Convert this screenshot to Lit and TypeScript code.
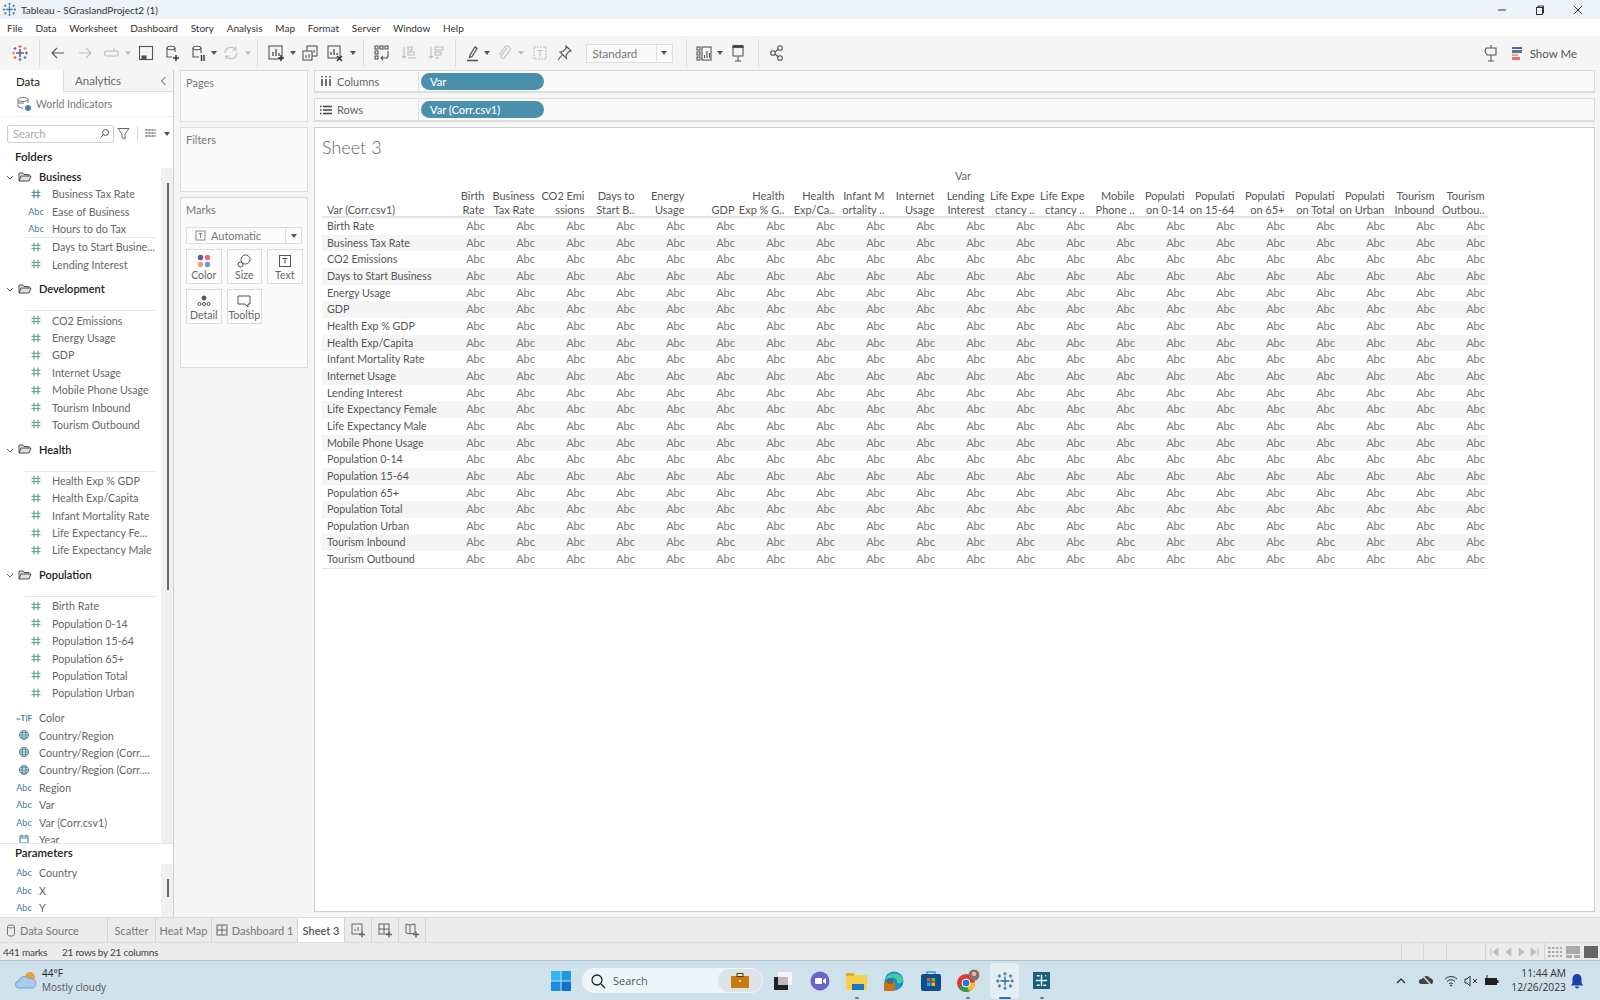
import { LitElement, html, css, svg } from "lit";
import { customElement } from "lit/decorators.js";

const ic = (body: any, c = "#555", s = 18) => html`<svg width=${s} height=${s} viewBox="0 0 18 18" fill="none" stroke=${c} stroke-width="1.1">${body}</svg>`;

const logoSvg = (a: string, b: string, c: string, d: string, s = 18) => html`<svg width=${s} height=${s} viewBox="0 0 18 18" fill="none" stroke-width="1.2">
  ${svg`<path d="M9 5v8M5 9h8" stroke=${a} stroke-width="1.6"/>
  <path d="M9 1v3M7.500 2.500h3" stroke=${b}/><path d="M9 14v3M7.500 15.500h3" stroke=${c}/>
  <path d="M1 9h3M2.500 7.500v3" stroke=${d}/><path d="M14 9h3M15.500 7.500v3" stroke=${a}/>
  <path d="M4 3v3M2.500 4.500h3" stroke=${c}/><path d="M14 3v3M12.500 4.500h3" stroke=${d}/>
  <path d="M4 12v3M2.500 13.500h3" stroke=${b}/><path d="M14 12v3M12.500 13.500h3" stroke=${c}/>`}
</svg>`;

const dark = "#555", off = "#bdbdbd";
type T = { w: number; k: string; i?: any };
const TOOL: T[] = [
  { w: 39, k: "i", i: logoSvg("#6b5b95", "#e15759", "#4e79a7", "#f28e2b") },
  { w: 1, k: "s" },
  { w: 4.5, k: "g" },
  { w: 27, k: "i", i: ic(svg`<path d="M15 9H3M8 4 3 9l5 5"/>`, dark) },
  { w: 27, k: "i", i: ic(svg`<path d="M3 9h12M10 4l5 5-5 5"/>`, off) },
  { w: 24, k: "i", i: ic(svg`<path d="M14 7H5a2.500 2.500 0 0 0 0 5h9a2 2 0 0 0 0-5M12 4v3"/>`, off) },
  { w: 10, k: "d", i: off },
  { w: 26, k: "i", i: ic(svg`<rect x="2.500" y="2.500" width="13" height="13"/><rect x="5" y="12" width="4" height="3.500" fill="#555"/>`, dark) },
  { w: 26, k: "i", i: ic(svg`<ellipse cx="8" cy="4" rx="4" ry="1.800"/><path d="M4 4v9h5M12 4v4"/><path d="M13 11v6M10 14h6" stroke-width="1.500" stroke="#333"/>`, dark) },
  { w: 26, k: "i", i: ic(svg`<ellipse cx="8" cy="4" rx="4" ry="1.800"/><path d="M4 4v9h6M12 4v5"/><path d="M12.500 11v6M15 11v6" stroke-width="1.400" stroke="#333"/>`, dark) },
  { w: 6, k: "d", i: dark },
  { w: 28, k: "i", i: ic(svg`<path d="M3 9a6 6 0 0 1 11-3M15 9a6 6 0 0 1-11 3M14 2.500V6h-3.500M4 15.500V12h3.500"/>`, off) },
  { w: 6, k: "d", i: off },
  { w: 6, k: "g" },
  { w: 1, k: "s" },
  { w: 8, k: "g" },
  { w: 20, k: "i", i: ic(svg`<rect x="2" y="2" width="13" height="13"/><path d="M6 12V8M9 12V5M12 12V9" stroke-width="1.400"/><path d="M14 11v6M11 14h6" stroke-width="1.500" stroke="#333"/>`, dark) },
  { w: 14, k: "d", i: dark },
  { w: 20, k: "i", i: ic(svg`<rect x="6" y="2" width="10" height="10"/><rect x="2" y="7" width="9" height="9" fill="#f5f5f5"/><path d="M5 14v-3M8 14v-4M13 9V6"/>`, dark) },
  { w: 30, k: "i", i: ic(svg`<rect x="2" y="2" width="12" height="12"/><path d="M5 11V8M8 11V5M11 11V9" stroke-width="1.400"/><path d="m11 12 5 5M16 12l-5 5" stroke="#333" stroke-width="1.500"/>`, dark) },
  { w: 6, k: "d", i: dark },
  { w: 7, k: "g" },
  { w: 1, k: "s" },
  { w: 6, k: "g" },
  { w: 24, k: "i", i: ic(svg`<rect x="2" y="2" width="3" height="3"/><rect x="7" y="2" width="3" height="3"/><rect x="12" y="2" width="3" height="3"/><rect x="2" y="7" width="3" height="3"/><rect x="2" y="12" width="3" height="3"/><path d="M15 7v5a2 2 0 0 1-2 2H8M10 12l-2 2 2 2"/>`, dark) },
  { w: 30, k: "i", i: ic(svg`<path d="M4 3v11M2 12l2 2 2-2"/><rect x="8" y="3" width="4" height="3"/><rect x="8" y="8" width="6" height="3"/><path d="M8 14h8"/>`, off) },
  { w: 24, k: "i", i: ic(svg`<path d="M4 3v11M2 12l2 2 2-2"/><rect x="8" y="3" width="8" height="3"/><rect x="8" y="8" width="6" height="3"/><path d="M8 14h4"/>`, off) },
  { w: 7, k: "g" },
  { w: 1, k: "s" },
  { w: 7, k: "g" },
  { w: 20, k: "i", i: ic(svg`<path d="M6 11 11 3l2 1.500-5 8-2.500 1zM3 16.500h11" stroke-width="1.300"/>`, dark) },
  { w: 9, k: "d", i: dark },
  { w: 24, k: "i", i: ic(svg`<path d="m12 4-6 8a2 2 0 0 0 3 2l6-8a3 3 0 0 0-5-3l-6 8"/>`, off) },
  { w: 10, k: "d", i: off },
  { w: 28, k: "i", i: ic(svg`<rect x="3" y="3" width="12" height="12" stroke-dasharray="2 1"/><path d="M6.500 6.500h5M9 6.500v6"/>`, off) },
  { w: 20, k: "i", i: ic(svg`<path d="M11 2 16 7l-2 .5-3 4 .5 3L5 8l3-.5 3-3zM7 11l-4 5"/>`, dark) },
  { w: 12, k: "g" },
];
const TOOL3: T[] = [
  { w: 13, k: "g" },
  { w: 1, k: "s" },
  { w: 7, k: "g" },
  { w: 20, k: "i", i: ic(svg`<rect x="2" y="3" width="3" height="3"/><rect x="2" y="8" width="3" height="3"/><rect x="2" y="13" width="3" height="3"/><rect x="7" y="3" width="9" height="13"/><path d="M9.500 14v-3M12 14V7M14.500 14v-5"/>`, dark) },
  { w: 12, k: "d", i: dark },
  { w: 24, k: "i", i: ic(svg`<path d="M3 3h12M4 3v9h10V3M9 12v5M6 17h6"/><rect x="4" y="1.500" width="10" height="2" fill="#333"/>`, dark) },
  { w: 8, k: "g" },
  { w: 1, k: "s" },
  { w: 9, k: "g" },
  { w: 18, k: "i", i: ic(svg`<circle cx="5" cy="9" r="2.300"/><circle cx="12" cy="4" r="2.300"/><circle cx="12" cy="14" r="2.300"/><path d="m7 8 3.500-3M7 10l3.500 3"/>`, dark) },
];

type F = { n: string; t: string };
const SECTIONS: { name: string; top: F[]; rest: F[] }[] = [
  { name: "Business", top: [{ n: "Business Tax Rate", t: "#b" }, { n: "Ease of Business", t: "A" }, { n: "Hours to do Tax", t: "A" }], rest: [{ n: "Days to Start Busine...", t: "#" }, { n: "Lending Interest", t: "#" }] },
  { name: "Development", top: [], rest: ["CO2 Emissions", "Energy Usage", "GDP", "Internet Usage", "Mobile Phone Usage", "Tourism Inbound", "Tourism Outbound"].map((n) => ({ n, t: "#" })) },
  { name: "Health", top: [], rest: ["Health Exp % GDP", "Health Exp/Capita", "Infant Mortality Rate", "Life Expectancy Fe...", "Life Expectancy Male"].map((n) => ({ n, t: "#" })) },
  { name: "Population", top: [], rest: ["Birth Rate", "Population 0-14", "Population 15-64", "Population 65+", "Population Total", "Population Urban"].map((n) => ({ n, t: "#" })) },
];
const ROOT: F[] = [
  { n: "Color", t: "TF" }, { n: "Country/Region", t: "G" }, { n: "Country/Region (Corr....", t: "G" }, { n: "Country/Region (Corr....", t: "G" },
  { n: "Region", t: "A" }, { n: "Var", t: "A" }, { n: "Var (Corr.csv1)", t: "A" }, { n: "Year", t: "D" },
];
const PARAMS: F[] = [{ n: "Country", t: "A" }, { n: "X", t: "A" }, { n: "Y", t: "A" }];

const ROWS = ["Birth Rate", "Business Tax Rate", "CO2 Emissions", "Days to Start Business", "Energy Usage", "GDP", "Health Exp % GDP", "Health Exp/Capita", "Infant Mortality Rate", "Internet Usage", "Lending Interest", "Life Expectancy Female", "Life Expectancy Male", "Mobile Phone Usage", "Population 0-14", "Population 15-64", "Population 65+", "Population Total", "Population Urban", "Tourism Inbound", "Tourism Outbound"];
const HEADS: [string, string][] = [["Birth", "Rate"], ["Business", "Tax Rate"], ["CO2 Emi", "ssions"], ["Days to", "Start B.."], ["Energy", "Usage"], ["", "GDP"], ["Health", "Exp % G.."], ["Health", "Exp/Ca.."], ["Infant M", "ortality .."], ["Internet", "Usage"], ["Lending", "Interest"], ["Life Expe", "ctancy .."], ["Life Expe", "ctancy .."], ["Mobile", "Phone .."], ["Populati", "on 0-14"], ["Populati", "on 15-64"], ["Populati", "on 65+"], ["Populati", "on Total"], ["Populati", "on Urban"], ["Tourism", "Inbound"], ["Tourism", "Outbou.."]];
const MENU = ["File", "Data", "Worksheet", "Dashboard", "Story", "Analysis", "Map", "Format", "Server", "Window", "Help"];

const typeIcon = (t: string) => {
  if (t === "#" || t === "#b")
    return html`<svg width="12" height="12" viewBox="0 0 12 12" fill="none" stroke=${t === "#" ? "#4f9e80" : "#3f7f8c"} stroke-width="1">${svg`<path d="M4 1.500v9M8 1.500v9M1.500 4.300h9M1.500 7.700h9"/>`}</svg>`;
  if (t === "A") return html`<span class="abc">Abc</span>`;
  if (t === "TF") return html`<span class="tf">=T|F</span>`;
  if (t === "G")
    return html`<svg width="12" height="12" viewBox="0 0 12 12" fill="none" stroke="#4a8496">${svg`<circle cx="6" cy="6" r="4.500"/><ellipse cx="6" cy="6" rx="2" ry="4.500"/><path d="M1.500 6h9M2 3.800h8M2 8.200h8"/>`}</svg>`;
  return html`<svg width="12" height="12" viewBox="0 0 12 12" fill="none" stroke="#4a8496">${svg`<rect x="2" y="3" width="8" height="7"/><path d="M2 5h8M4 1.500v2M8 1.500v2"/>`}</svg>`;
};
const folder = html`<svg width="14" height="12" viewBox="0 0 14 12" fill="none" stroke="#555" stroke-width="1">${svg`<path d="M1 10V2h4l1 1.500h5V5M1 10l2-5h10l-2 5z" fill="#ddd"/>`}</svg>`;
const chev = html`<svg width="8" height="6" viewBox="0 0 8 6" fill="none" stroke="#666">${svg`<path d="m1 1 3 3 3-3"/>`}</svg>`;
const tri = (c: string) => html`<svg width="6" height="4" viewBox="0 0 6 4" fill=${c}>${svg`<path d="M0 0h6L3 4z"/>`}</svg>`;
const navI = (d: string) => html`<svg width="10" height="10" viewBox="0 0 10 10" fill="#bbb" stroke="#bbb" stroke-width=".8">${svg`<path d=${d}/>`}</svg>`;

@customElement("app-root")
export class AppRoot extends LitElement {
  static styles = css`
    :host { display: flex; flex-direction: column; width: 1600px; height: 1000px; overflow: hidden; background: #f5f5f5; font-family: Lato, "Open Sans", sans-serif; font-size: 11px; color: #555; }
    .title { height: 19px; background: #edf3f8; display: flex; align-items: center; padding-left: 2px; color: #333; font-size: 10px; gap: 4px; flex: none; }
    .title .sp { flex: 1; }
    .wc { display: flex; width: 34px; justify-content: center; align-items: center; }
    .wce { width: 1px; }
    .menu { height: 17px; background: #fff; display: flex; align-items: center; padding-left: 7px; gap: 12.800px; color: #333; font-size: 10px; flex: none; }
    .tools { height: 34px; background: #f5f5f5; display: flex; align-items: center; flex: none; }
    .ti-i { display: flex; justify-content: center; align-items: center; height: 24px; flex: none; }
    .t-s { background: #dcdcdc; height: 28px; flex: none; }
    .tg { flex: none; }
    .std { width: 87px; height: 19px; border: 1px solid #ddd; background: #fafafa; display: flex; align-items: center; justify-content: space-between; color: #777; font-size: 11.500px; padding-left: 6px; box-sizing: border-box; flex: none; }
    .std i { width: 15px; height: 17px; border-left: 1px solid #e2e2e2; display: flex; align-items: center; justify-content: center; }
    .grow { flex: 1; }
    .post { margin-right: 12px; }
    .showme { display: flex; align-items: center; gap: 8px; color: #555; font-size: 11.500px; margin-right: 23px; }
    .smi { display: flex; flex-direction: column; gap: 1px; width: 10px; }
    .smi b { height: 2.500px; display: block; }
    .sm1 { background: #6b5b95; } .sm2 { background: #4e79a7; } .sm3 { background: #f5a36b; width: 60%; } .sm4 { background: #ee6a7a; width: 80%; }
    .main { flex: 1; display: flex; min-height: 0; }
    .left { width: 174px; flex: none; background: #fff; border-right: 1px solid #cfcfcf; box-sizing: border-box; display: flex; flex-direction: column; min-height: 0; }
    .tabs { height: 22px; display: flex; flex: none; font-size: 11.500px; background: #f5f5f5; }
    .tab-a { width: 64px; background: #fff; border-right: 1px solid #ddd; color: #222; display: flex; align-items: center; padding-left: 16px; box-sizing: border-box; }
    .tab-b { flex: 1; display: flex; align-items: center; padding-left: 11px; justify-content: space-between; padding-right: 6px; color: #666; border-bottom: 1px solid #ddd; }
    .ds { height: 25px; flex: none; display: flex; align-items: center; gap: 4px; padding-left: 16px; color: #777; border-bottom: 1px solid #eee; box-sizing: border-box; font-size: 10.500px; }
    .srch { height: 19px; flex: none; margin-top: 7px; display: flex; align-items: center; padding-left: 7px; gap: 3px; }
    .sb { width: 107px; height: 18px; box-sizing: border-box; border: 1px solid #d0d0d0; border-radius: 2px; display: flex; align-items: center; justify-content: space-between; color: #aaa; padding: 0 3px 0 5px; }
    .sep { width: 1px; height: 15px; background: #ddd; margin: 0 4px; }
    .srt { margin-left: 5px; display: flex; }
    .hd { color: #222; padding-left: 15px; font-size: 11.500px; font-weight: 600; line-height: 14px; height: 14px; flex: none; }
    .folders { margin-top: 7px; }
    .scrollwrap { flex: 1; min-height: 0; display: flex; margin-top: 4px; }
    .list { width: 161px; overflow: hidden; flex: none; }
    .track { flex: 1; background: #f0f0f0; }
    .thumb { width: 2px; background: #666; margin-left: 6px; }
    .t1 { margin-top: 15px; height: 407px; }
    .t2 { margin-top: 15px; height: 18px; }
    .sec { margin-bottom: 7.500px; }
    .sec-h { height: 17px; display: flex; align-items: center; color: #222; font-weight: 600; padding-left: 6px; }
    .sec-h .f { margin: 0 7px 0 4px; display: flex; }
    .gapline { border-top: 1.500px solid #e6e6e6; margin: 0 6px 0 25px; }
    .gl-t { margin-top: 13px; }
    .row { height: 17.400px; display: flex; align-items: center; white-space: nowrap; color: #666; font-size: 10.700px; }
    .row .ic { display: flex; justify-content: center; align-items: center; flex: none; }
    .in .ic { width: 22px; margin-left: 25px; }
    .in .nm { margin-left: 5px; }
    .rt .ic { width: 20px; margin-left: 14px; }
    .rt .nm { margin-left: 5px; }
    .abc { font-size: 9px; color: #3f7a99; }
    .tf { font-size: 8px; color: #3f7a99; font-weight: 700; }
    .param { flex: none; border-top: 1px solid #e6e6e6; }
    .param .hd { margin-top: 2px; }
    .pl { display: flex; margin-top: 4px; height: 53px; }
    .mid { width: 140px; flex: none; padding: 0 0 0 6px; box-sizing: border-box; display: flex; flex-direction: column; gap: 5px; }
    .card { background: #fafafa; border: 1px solid #dcdcdc; box-sizing: border-box; padding: 5px 5px; color: #777; width: 128px; flex: none; }
    .c1 { height: 52px; }
    .c2 { height: 65px; }
    .c3 { height: 171px; }
    .mk-d { height: 17px; margin-top: 11px; border: 1px solid #dcdcdc; box-sizing: border-box; display: flex; align-items: center; justify-content: space-between; padding-left: 8px; gap: 5px; background: #fcfcfc; }
    .mk-d span { flex: 1; }
    .mk-d i { width: 15px; height: 100%; border-left: 1px solid #dcdcdc; display: flex; align-items: center; justify-content: center; }
    .mk-g { display: grid; grid-template-columns: repeat(3, 35.500px); gap: 5px 5px; margin-top: 5px; }
    .mk { height: 35px; border: 1px solid #dcdcdc; box-sizing: border-box; display: flex; flex-direction: column; align-items: center; justify-content: flex-end; padding-bottom: 2px; font-size: 10.500px; color: #666; background: #fcfcfc; gap: 1px; }
    .right { flex: 1; min-width: 0; display: flex; flex-direction: column; padding: 0 5px 5px 0; gap: 5px; }
    .shelf { height: 24px; flex: none; background: #fafafa; border: 1px solid #dcdcdc; border-bottom-width: 2px; box-sizing: border-box; display: flex; align-items: center; }
    .shelf.s1 { height: 23px; }
    .sl { width: 104px; height: 100%; border-right: 1px solid #e2e2e2; box-sizing: border-box; display: flex; align-items: center; padding-left: 5px; gap: 5px; color: #666; font-size: 11px; }
    .pill { margin-left: 2px; width: 123px; height: 17px; border-radius: 9px; background: #4a90ad; color: #fff; padding-left: 9px; box-sizing: border-box; display: flex; align-items: center; font-size: 11px; font-weight: 500; }
    .sheet { flex: 1; min-height: 0; background: #fff; border: 1px solid #cfcfcf; box-sizing: border-box; padding: 0 0 0 7px; }
    .stitle { font-size: 18px; font-weight: 300; color: #666; height: 21px; line-height: 21px; margin-top: 9px; }
    .varh { text-align: center; width: 1166px; padding-left: 116px; box-sizing: border-box; color: #666; margin-top: 11px; height: 14px; line-height: 14px; }
    .tbl { display: grid; grid-template-columns: 116px repeat(21, 50px); width: 1166px; margin-top: 6px; }
    .th { height: 27px; border-bottom: 2px solid #e6e6e6; box-sizing: content-box; text-align: right; padding-right: 3.500px; line-height: 13.500px; color: #555; white-space: nowrap; overflow: hidden; }
    .th0 { text-align: left; padding-left: 5px; display: flex; align-items: flex-end; font-size: 10.700px; }
    .c { height: 16.670px; line-height: 16.670px; text-align: right; padding-right: 3px; color: #777; box-sizing: border-box; }
    .c0 { text-align: left; padding-left: 5px; color: #555; white-space: nowrap; font-size: 10.700px; }
    .odd { background: #f5f5f5; }
    .last { grid-column: 1 / -1; border-top: 1px solid #e6e6e6; }
    .tabbar { height: 25px; flex: none; background: #ebebeb; border-top: 1px solid #dcdcdc; box-sizing: border-box; display: flex; color: #777; font-size: 11px; }
    .tb { display: flex; align-items: center; justify-content: center; gap: 4px; border-right: 1px solid #d4d4d4; box-sizing: border-box; flex: none; }
    .w0 { width: 108px; justify-content: flex-start; padding-left: 5px; gap: 3px; } .w1 { width: 48px; } .w2 { width: 56px; } .w3 { width: 86px; } .w5 { width: 27px; }
    .act { width: 47px; background: #fff; color: #555; font-weight: 600; }
    .status { height: 18px; flex: none; background: #ebebeb; border-top: 1px solid #dcdcdc; box-sizing: border-box; display: flex; align-items: center; padding-left: 3px; color: #444; font-size: 10px; letter-spacing: -.25px; }
    .status .s2 { margin-left: 15px; }
    .stc { width: 22.500px; height: 100%; border-left: 1px solid #d4d4d4; box-sizing: border-box; flex: none; }
    .stw { width: 39.500px; }
    .stn { height: 100%; border-left: 1px solid #d4d4d4; display: flex; align-items: center; gap: 3px; padding-left: 3px; box-sizing: border-box; flex: none; width: 59px; }
    .stn span { width: 10.500px; display: flex; justify-content: center; flex: none; }
    .stv { width: 56px; gap: 2px; padding-left: 2px; }
    .stv span { width: 16px; }
    .taskbar { height: 40px; flex: none; background: #cfe2ec; border-top: 1px solid #a9c0cd; box-sizing: border-box; display: flex; align-items: center; font-family: "Open Sans", sans-serif; color: #222; }
    .wx { display: flex; align-items: center; gap: 5px; padding-left: 15px; width: 551px; box-sizing: border-box; flex: none; }
    .wx div { font-size: 10px; line-height: 13.500px; }
    .wx small { color: #555; font-size: 10px; display: block; }
    .pillsearch { width: 181px; height: 25px; border-radius: 13px; background: #eef5f9; display: flex; align-items: center; margin-left: 11px; padding-left: 8px; gap: 7px; box-sizing: border-box; color: #555; font-size: 11px; flex: none; }
    .pillsearch span { flex: 1; }
    .brief { width: 44px; height: 23px; border-radius: 11px; background: #dde4e8; display: flex; align-items: center; justify-content: center; margin-right: 1px; }
    .apps { display: flex; align-items: center; margin-left: 1px; }
    .app { width: 37px; display: flex; justify-content: center; align-items: center; height: 36px; flex: none; position: relative; }
    .app.on { background: #e4eff5; border-radius: 4px; width: 29px; margin: 0 4px; }
    .dot { position: absolute; bottom: 0; width: 4px; height: 2px; border-radius: 1px; background: #777; }
    .on .dot { width: 12px; background: #2f6fd0; }
    .tray { flex: 1; display: flex; align-items: center; justify-content: flex-end; padding-right: 16px; }
    .tri { display: flex; justify-content: center; flex: none; }
    .tw1 { width: 22px; } .tw2 { width: 28px; } .tw3 { width: 22px; } .tw4 { width: 18px; }
    .clock { text-align: right; font-size: 10.300px; line-height: 13.500px; margin-left: 9px; margin-right: 4px; color: #333; }
  `;

  fieldRow(f: F, cls: string) {
    return html`<div class="row ${cls}"><span class="ic">${typeIcon(f.t)}</span><span class="nm">${f.n}</span></div>`;
  }
  toolItems(list: T[]) {
    return list.map((t) => {
      const st = `width:${t.w}px`;
      if (t.k === "s") return html`<div class="t-s" style=${st}></div>`;
      if (t.k === "d") return html`<div class="ti-i" style=${st}>${tri(t.i)}</div>`;
      if (t.k === "g") return html`<div class="tg" style=${st}></div>`;
      return html`<div class="ti-i" style=${st}>${t.i}</div>`;
    });
  }

  render() {
    return html`
      <div class="title">
        ${logoSvg("#4a7fa7", "#4a7fa7", "#4a7fa7", "#4a7fa7", 15)}
        <span>Tableau - SGraslandProject2 (1)</span><span class="sp"></span>
        <span class="wc"><svg width="10" height="10" viewBox="0 0 10 10" stroke="#333" fill="none">${svg`<path d="M1 5h8"/>`}</svg></span>
        <span class="wc"><svg width="10" height="10" viewBox="0 0 10 10" stroke="#333" fill="none">${svg`<rect x="1.500" y="2.500" width="6" height="7"/><path d="M3 2.500V1h5.500v7H7.500"/>`}</svg></span>
        <span class="wc"><svg width="10" height="10" viewBox="0 0 10 10" stroke="#333" fill="none">${svg`<path d="m1 1 8 8M9 1 1 9"/>`}</svg></span>
        <span class="wce"></span>
      </div>
      <div class="menu">${MENU.map((m) => html`<span>${m}</span>`)}</div>
      <div class="tools">
        ${this.toolItems(TOOL)}
        <div class="std"><span>Standard</span><i>${tri("#555")}</i></div>
        ${this.toolItems(TOOL3)}
        <div class="grow"></div>
        <div class="ti-i post">${ic(svg`<path d="M9 1v3M4 4h10v7H5L3 7.500zM9 11v6M6 17h6"/>`, dark)}</div>
        <div class="showme"><div class="smi"><b class="sm1"></b><b class="sm2"></b><b class="sm3"></b><b class="sm4"></b></div><span>Show Me</span></div>
      </div>
      <div class="main">
        <div class="left">
          <div class="tabs"><div class="tab-a">Data</div><div class="tab-b"><span>Analytics</span><svg width="7" height="10" viewBox="0 0 7 10" fill="none" stroke="#555">${svg`<path d="M5.500 1 1.500 5l4 4"/>`}</svg></div></div>
          <div class="ds"><svg width="16" height="16" viewBox="0 0 16 16" fill="none" stroke="#777">${svg`<ellipse cx="7" cy="3.500" rx="5" ry="2"/><path d="M2 3.500v7l5 2M12 3.500V7M2 7h6"/><circle cx="12" cy="12" r="3" fill="#3f86b0" stroke="none"/>`}</svg><span>World Indicators</span></div>
          <div class="srch">
            <div class="sb"><span>Search</span><svg width="11" height="11" viewBox="0 0 11 11" fill="none" stroke="#555">${svg`<circle cx="6.500" cy="4.500" r="3"/><path d="M4.500 6.500 1.500 9.500"/>`}</svg></div>
            <svg width="13" height="13" viewBox="0 0 13 13" fill="none" stroke="#666">${svg`<path d="M1 1.500h11L8 7v5L5 10.500V7z"/>`}</svg>
            <span class="sep"></span>
            <svg width="11" height="9" viewBox="0 0 11 9" stroke="#777" fill="none">${svg`<path d="M0 1h11M0 4h11M0 7h11M2 0v8M5 0v8M8 0v8" stroke-dasharray="2 1"/>`}</svg>
            <span class="srt">${tri("#555")}</span>
          </div>
          <div class="hd folders">Folders</div>
          <div class="scrollwrap">
            <div class="list">
              ${SECTIONS.map((s) => html`<div class="sec">
                <div class="sec-h"><span>${chev}</span><span class="f">${folder}</span><span>${s.name}</span></div>
                ${s.top.map((f) => this.fieldRow(f, "in"))}
                <div class="gapline ${s.top.length ? "" : "gl-t"}"></div>
                ${s.rest.map((f) => this.fieldRow(f, "in"))}
              </div>`)}
              ${ROOT.map((f) => this.fieldRow(f, "rt"))}
            </div>
            <div class="track"><div class="thumb t1"></div></div>
          </div>
          <div class="param">
            <div class="hd">Parameters</div>
            <div class="pl">
              <div class="list">${PARAMS.map((f) => this.fieldRow(f, "rt"))}</div>
              <div class="track"><div class="thumb t2"></div></div>
            </div>
          </div>
        </div>
        <div class="mid">
          <div class="card c1">Pages</div>
          <div class="card c2">Filters</div>
          <div class="card c3">Marks
            <div class="mk-d"><svg width="11" height="11" viewBox="0 0 11 11" fill="none" stroke="#888">${svg`<rect x="1" y="1" width="9" height="9"/><path d="M3.500 3.500h4M5.500 3.500v4.500"/>`}</svg><span>Automatic</span><i>${tri("#555")}</i></div>
            <div class="mk-g">
              <div class="mk"><svg width="14" height="14" viewBox="0 0 14 14">${svg`<circle cx="3.500" cy="3.500" r="2.700" fill="#6b5b95"/><circle cx="10.500" cy="3.500" r="2.700" fill="#ee6a7a"/><circle cx="3.500" cy="10.500" r="2.700" fill="#f2a26b"/><circle cx="10.500" cy="10.500" r="2.700" fill="#6f9bc8"/>`}</svg>Color</div>
              <div class="mk"><svg width="14" height="14" viewBox="0 0 14 14" fill="none" stroke="#555">${svg`<circle cx="8.500" cy="5.500" r="4.500"/><circle cx="3.500" cy="10.500" r="2.500" fill="#fcfcfc"/>`}</svg>Size</div>
              <div class="mk"><svg width="14" height="14" viewBox="0 0 14 14" fill="none" stroke="#555">${svg`<rect x="1.500" y="1.500" width="11" height="11"/><path d="M4.500 4.500h5M7 4.500v5"/>`}</svg>Text</div>
              <div class="mk"><svg width="14" height="14" viewBox="0 0 14 14" fill="none" stroke="#555">${svg`<circle cx="7" cy="4" r="2" fill="#555"/><circle cx="2.500" cy="10" r="1.500"/><circle cx="7" cy="10" r="1.500"/><circle cx="11.500" cy="10" r="1.500"/>`}</svg>Detail</div>
              <div class="mk"><svg width="14" height="14" viewBox="0 0 14 14" fill="none" stroke="#555">${svg`<path d="M1 2h12v8h-2v3L8 10H1z"/>`}</svg>Tooltip</div>
            </div>
          </div>
        </div>
        <div class="right">
          <div class="shelf s1"><div class="sl"><svg width="12" height="10" viewBox="0 0 12 10" stroke="#444" stroke-width="1.500" fill="none">${svg`<path d="M2 3v7M6 3v7M10 3v7M2 0v1.500M6 0v1.500M10 0v1.500"/>`}</svg><span>Columns</span></div><div class="pill">Var</div></div>
          <div class="shelf"><div class="sl"><svg width="12" height="10" viewBox="0 0 12 10" stroke="#444" stroke-width="1.500" fill="none">${svg`<path d="M3 1.500h9M3 5h9M3 8.500h9M0 1.500h1.500M0 5h1.500M0 8.500h1.500"/>`}</svg><span>Rows</span></div><div class="pill">Var (Corr.csv1)</div></div>
          <div class="sheet">
            <div class="stitle">Sheet 3</div>
            <div class="varh">Var</div>
            <div class="tbl">
              <div class="th th0"><span>Var (Corr.csv1)</span></div>
              ${HEADS.map((h) => html`<div class="th">${h[0] || "\u00a0"}<br />${h[1]}</div>`)}
              ${ROWS.map((r, i) => html`<div class="c c0 ${i % 2 ? "odd" : ""}">${r}</div>${HEADS.map(() => html`<div class="c ${i % 2 ? "odd" : ""}">Abc</div>`)}`)}
              <div class="last"></div>
            </div>
          </div>
        </div>
      </div>
      <div class="tabbar">
        <div class="tb w0"><svg width="12" height="13" viewBox="0 0 12 13" fill="none" stroke="#777">${svg`<ellipse cx="6" cy="2.500" rx="3.500" ry="1.500"/><path d="M2.500 2.500v8c0 2 7 2 7 0v-8"/>`}</svg>Data Source</div>
        <div class="tb w1">Scatter</div>
        <div class="tb w2">Heat Map</div>
        <div class="tb w3"><svg width="12" height="12" viewBox="0 0 12 12" fill="none" stroke="#666">${svg`<rect x="1" y="1" width="10" height="10"/><path d="M6 1v10M1 6h10"/>`}</svg>Dashboard 1</div>
        <div class="tb act">Sheet 3</div>
        <div class="tb w5"><svg width="15" height="15" viewBox="0 0 15 15" fill="none" stroke="#666">${svg`<rect x="1" y="1" width="10" height="10"/><path d="M4 8V6M7 8V4"/><path d="M11 8.500v6M8 11.500h6" stroke-width="1.400"/>`}</svg></div>
        <div class="tb w5"><svg width="15" height="15" viewBox="0 0 15 15" fill="none" stroke="#666">${svg`<rect x="1" y="1" width="10" height="10"/><path d="M6 1v10M1 6h10"/><path d="M11 8.500v6M8 11.500h6" stroke-width="1.400"/>`}</svg></div>
        <div class="tb w5"><svg width="15" height="15" viewBox="0 0 15 15" fill="none" stroke="#666">${svg`<path d="M1 1l4 1 5-1v9l-5 1-4-1zM5 2v9"/><path d="M11 8.500v6M8 11.500h6" stroke-width="1.400"/>`}</svg></div>
      </div>
      <div class="status">
        <span>441 marks</span><span class="s2">21 rows by 21 columns</span><span class="grow"></span>
        <div class="stc"></div><div class="stc"></div><div class="stc stw"></div>
        <div class="stn">
          <span>${navI("M2 1v8M9 1 4 5l5 4z")}</span><span>${navI("M8 1 3 5l5 4z")}</span><span>${navI("M3 1l5 4-5 4z")}</span><span>${navI("M8 1v8M1 1l5 4-5 4z")}</span>
        </div>
        <div class="stn stv">
          <span><svg width="14" height="12" viewBox="0 0 14 12" fill="none" stroke="#aaa" stroke-width="2" stroke-dasharray="2.500 1.500">${svg`<path d="M0 2h14M0 6h14M0 10h14"/>`}</svg></span>
          <span><svg width="14" height="12" viewBox="0 0 14 12">${svg`<rect width="14" height="8" fill="#aaa"/><rect y="9" width="6" height="3" fill="#aaa"/><rect x="8" y="9" width="6" height="3" fill="#aaa"/>`}</svg></span>
          <span><svg width="14" height="12" viewBox="0 0 14 12">${svg`<rect width="14" height="12" fill="#666"/>`}</svg></span>
        </div>
      </div>
      <div class="taskbar">
        <div class="wx">
          <svg width="22" height="20" viewBox="0 0 22 20">${svg`<circle cx="15" cy="6" r="5" fill="#f0a030"/><path d="M4 17a3.500 3.500 0 0 1 0-7 5.500 5.500 0 0 1 10-2 4.500 4.500 0 0 1 4 9z" fill="#a9cbee" stroke="#6f9fdc"/>`}</svg>
          <div>44°F<small>Mostly cloudy</small></div>
        </div>
        <svg width="20" height="20" viewBox="0 0 20 20">${svg`<rect width="9.500" height="9.500" fill="#36b5ee"/><rect x="10.500" width="9.500" height="9.500" fill="#1e9ae6"/><rect y="10.500" width="9.500" height="9.500" fill="#1a8ddc"/><rect x="10.500" y="10.500" width="9.500" height="9.500" fill="#0f74cc"/>`}</svg>
        <div class="pillsearch">
          <svg width="16" height="16" viewBox="0 0 16 16" fill="none" stroke="#222" stroke-width="1.300">${svg`<circle cx="7" cy="7" r="5"/><path d="m11 11 4 4"/>`}</svg>
          <span>Search</span>
          <div class="brief"><svg width="18" height="15" viewBox="0 0 18 15">${svg`<rect y="3" width="18" height="12" rx="1" fill="#c97a10"/><rect x="6" y="0.500" width="6" height="3" fill="none" stroke="#5a3a10"/><rect x="8" y="7" width="2" height="2" fill="#fde3a0"/>`}</svg></div>
        </div>
        <div class="apps">
          <div class="app"><svg width="20" height="20" viewBox="0 0 20 20">${svg`<rect x="5" y="1" width="14" height="13" fill="#f4f4f4"/><rect x="1" y="6" width="14" height="13" fill="#222"/><rect x="5" y="6" width="10" height="8" fill="#bbb"/>`}</svg></div>
          <div class="app"><svg width="20" height="20" viewBox="0 0 20 20">${svg`<circle cx="10" cy="10" r="9.500" fill="#6b63c9"/><rect x="5" y="7" width="7" height="6" rx="1" fill="#fff"/><path d="m13 9 3-2v6l-3-2z" fill="#fff"/>`}</svg></div>
          <div class="app"><svg width="21" height="18" viewBox="0 0 21 18">${svg`<path d="M0 1h8l2 2h11v15H0z" fill="#f7d04c"/><rect x="0" y="1" width="8" height="3" fill="#e2a92a"/><rect x="6" y="12" width="12" height="6" fill="#1a78c2"/>`}</svg><span class="dot"></span></div>
          <div class="app"><svg width="20" height="20" viewBox="0 0 20 20">${svg`<circle cx="10" cy="10" r="9.500" fill="#1b8fd1"/><path d="M1 9a9.500 9.500 0 0 1 18 0c0 3-4 4-6 3 2-5-6-8-12-3z" fill="#3fd0a0"/><rect x="0" y="11" width="11" height="9" rx="1" fill="#c4731a"/><rect x="4" y="9" width="4" height="3" fill="none" stroke="#7a4a10"/>`}</svg></div>
          <div class="app"><svg width="20" height="20" viewBox="0 0 20 20">${svg`<rect y="3" width="20" height="17" rx="2" fill="#0f4d8c"/><path d="M6 3V1h8v2" fill="none" stroke="#3a9ad9" stroke-width="1.500"/><rect x="6" y="7" width="3.500" height="3.500" fill="#e8552c"/><rect x="10.500" y="7" width="3.500" height="3.500" fill="#7bb52a"/><rect x="6" y="11.500" width="3.500" height="3.500" fill="#29a7e8"/><rect x="10.500" y="11.500" width="3.500" height="3.500" fill="#f7b500"/>`}</svg></div>
          <div class="app"><svg width="24" height="24" viewBox="0 0 24 24">${svg`<circle cx="10" cy="14" r="9" fill="#e3342f"/><path d="M10 14 2.200 18.500A9 9 0 0 0 14 22z" fill="#2aa14a"/><path d="M10 14l9-.5a9 9 0 0 1-6 8.500z" fill="#f8c416"/><circle cx="10" cy="14" r="4" fill="#2f6fe0" stroke="#fff"/><circle cx="18" cy="6" r="5.500" fill="#8a6f63"/><circle cx="18" cy="5" r="2.200" fill="#e3b9a3"/>`}</svg><span class="dot"></span></div>
          <div class="app on">${logoSvg("#5a7fa6", "#5a7fa6", "#5a7fa6", "#5a7fa6", 20)}<span class="dot"></span></div>
          <div class="app"><svg width="17" height="17" viewBox="0 0 18 18">${svg`<rect width="18" height="18" fill="#1d5c7a"/><path d="M9 3v12M3 9h12M4 4h3M13 4h1M4 14h3M11 14h3" stroke="#dff" stroke-width="1.500"/>`}</svg><span class="dot"></span></div>
        </div>
        <div class="tray">
          <span class="tri tw1"><svg width="10" height="6" viewBox="0 0 10 6" fill="none" stroke="#222" stroke-width="1.200">${svg`<path d="m1 5 4-4 4 4"/>`}</svg></span>
          <span class="tri tw2"><svg width="15" height="13" viewBox="0 0 15 13">${svg`<path d="M2 10a2.500 2.500 0 0 1 1-5 4.500 4.500 0 0 1 8-1 3.500 3.500 0 0 1 2 6z" fill="#444"/><path d="m3 1 10 11" stroke="#cfe2ec" stroke-width="1.500"/>`}</svg></span>
          <span class="tri tw3"><svg width="14" height="12" viewBox="0 0 14 12" fill="none" stroke="#333">${svg`<path d="M1 4a8.500 8.500 0 0 1 12 0M3 6.500a5.500 5.500 0 0 1 8 0M5 9a2.500 2.500 0 0 1 4 0"/><circle cx="7" cy="10.500" r=".6" fill="#333"/>`}</svg></span>
          <span class="tri tw4"><svg width="14" height="12" viewBox="0 0 14 12" fill="none" stroke="#333">${svg`<path d="M1 4h2l3-3v10L3 8H1zM9 4l4 4M13 4 9 8"/>`}</svg></span>
          <span class="tri tw3"><svg width="15" height="11" viewBox="0 0 15 11">${svg`<rect x="1" y="3" width="12" height="7" fill="#222"/><rect x="13" y="5" width="1.500" height="3" fill="#222"/><path d="M3 3V0" stroke="#222"/>`}</svg></span>
          <div class="clock">11:44 AM<br />12/26/2023</div>
          <svg width="14" height="16" viewBox="0 0 14 16">${svg`<path d="M7 1a4.500 4.500 0 0 0-4.500 4.500V10L1 12.500h12L11.500 10V5.500A4.500 4.500 0 0 0 7 1zM5 13.500a2 2 0 0 0 4 0z" fill="#1c3fb0"/>`}</svg>
        </div>
      </div>
    `;
  }
}
